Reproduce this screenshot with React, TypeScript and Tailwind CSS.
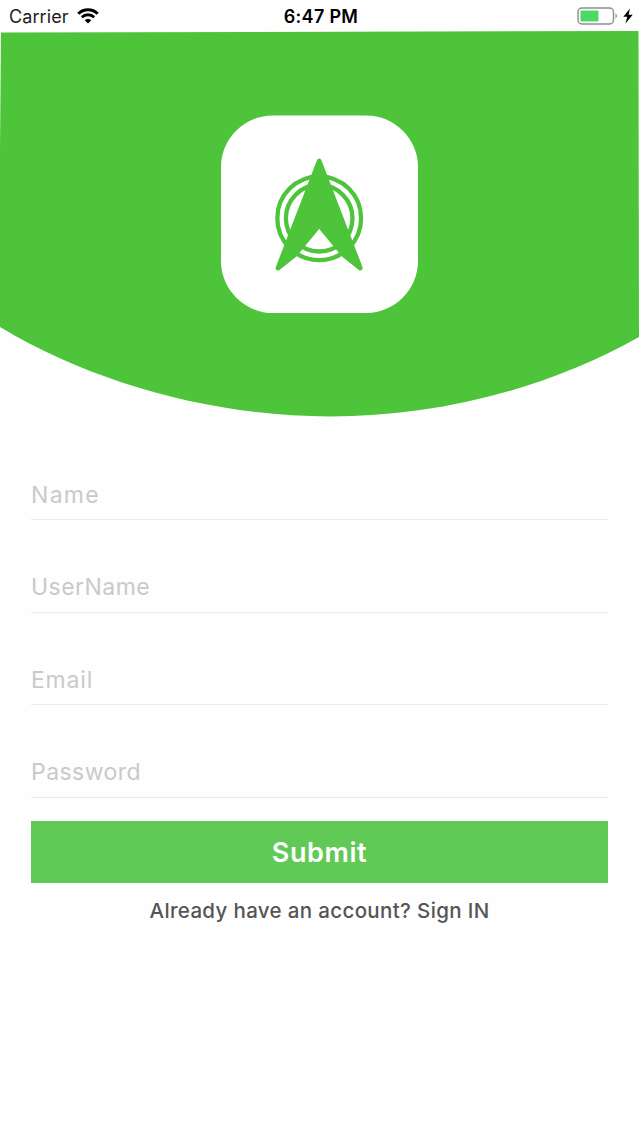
import { useState } from "react"

const fields = [
  { name: "name", type: "text", label: "Name", spacing: "placeholder:tracking-[1.3px]" },
  { name: "username", type: "text", label: "UserName", spacing: "placeholder:tracking-[0.45px]" },
  { name: "email", type: "email", label: "Email", spacing: "placeholder:tracking-[0.8px]" },
  { name: "password", type: "password", label: "Password", spacing: "placeholder:tracking-[0.45px]" },
]

function StatusBar() {
  return (
    <div className="grid h-[31px] grid-cols-3 items-center pt-px pr-1.5 pl-[9px] text-[18px] text-[#1c1c1e]">
      <div className="flex items-center gap-[8px]">
        <span className="tracking-[0.1px]">Carrier</span>
        <svg width="22" height="16" viewBox="0 0 22 16" fill="none" stroke="#000" strokeWidth="2.9">
          <path d="M1.3 5.7a13.8 13.8 0 0 1 19.4 0" />
          <path d="M4.9 9.3a8.7 8.7 0 0 1 12.2 0" />
          <path d="M11 15.6 7.7 12.2a4.8 4.8 0 0 1 6.6 0z" fill="#000" stroke="none" />
        </svg>
      </div>
      <span className="text-center font-semibold tracking-[0.3px] text-black">6:47 PM</span>
      <div className="flex items-center justify-end gap-1">
        <svg width="42" height="18" viewBox="0 0 42 18" fill="none">
          <rect x="1" y="1" width="35.5" height="16" rx="4" stroke="#8e8e93" strokeWidth="1.4" />
          <rect x="3.5" y="3.5" width="18" height="11" rx="1" fill="#4cd964" />
          <path d="M38.5 6.5c1.8.8 1.8 4.2 0 5z" fill="#8e8e93" />
        </svg>
        <svg width="10" height="16" viewBox="0 0 10 16">
          <path d="M7 .5.3 8.8h3.9L2.5 15.5 9.7 6.7H5.6z" fill="#000" />
        </svg>
      </div>
    </div>
  )
}

function Logo() {
  return (
    <svg width="197" height="198" viewBox="0 0 197 198" fill="none">
      <path
        d="M52 .5H145C174 .5 197 24 197 52V146C197 174 174 198 145 198H52C23 198 0 174 0 146V52C0 24 23 .5 52 .5z"
        fill="#fff"
      />
      <g stroke="#4dc43a">
        <circle cx="98.2" cy="103.2" r="41.9" strokeWidth="4.3" />
        <circle cx="98.2" cy="103.2" r="33.3" strokeWidth="4.3" />
      </g>
      <path
        d="M98.2 46 57 153 74 139.5 98.2 110.3 122.4 139.5 139.3 153z"
        fill="#4dc43a"
        stroke="#4dc43a"
        strokeWidth="4.8"
        strokeLinejoin="round"
      />
    </svg>
  )
}

export default function App() {
  const [values, setValues] = useState<Record<string, string>>({})

  return (
    <main className="min-h-[1136px] w-full bg-[#fefefe] font-['Inter',sans-serif]">
      <StatusBar />
      <header className="grid h-[386px]">
        <svg className="col-start-1 row-start-1" width="639" height="386" viewBox="0 31 639 386">
          <path
            d="M1 32.5 638.5 31 639 337C545 390 435 416.5 330 416.5C220 416.5 98 386 0 327V150z"
            fill="#4dc43a"
          />
        </svg>
        <div className="col-start-1 row-start-1 flex justify-center pt-[84px]">
          <Logo />
        </div>
      </header>
      <form className="px-[31px] pt-[51px]" onSubmit={(e) => e.preventDefault()}>
        {fields.map((field) => (
          <div className="mb-[40.6px] h-[52px] border-b-[1.5px] border-[#e9e9eb]" key={field.name}>
            <input
              className={`h-[52px] w-full bg-transparent pt-px text-[23px] text-[#555] outline-none placeholder:text-[#c9c9cc] ${field.spacing}`}
              type={field.type}
              name={field.name}
              placeholder={field.label}
              value={values[field.name] ?? ""}
              onChange={(e) => setValues({ ...values, [field.name]: e.target.value })}
            />
          </div>
        ))}
        <button
          className="-mt-[17px] block h-[62px] w-full bg-[#61c955] pt-px text-[27px] font-semibold tracking-[0.6px] text-white"
          type="submit"
        >
          Submit
        </button>
        <p className="mt-[13px] text-center text-[20.5px] font-medium tracking-[0.35px] text-[#555]">
          Already have an account? Sign IN
        </p>
      </form>
    </main>
  )
}
